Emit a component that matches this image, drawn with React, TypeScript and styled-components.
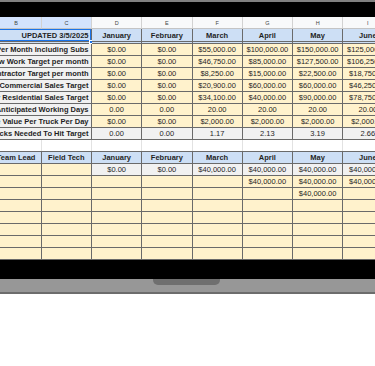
import React from 'react';
import styled, { createGlobalStyle } from 'styled-components';

const GlobalStyle = createGlobalStyle`
  html, body { margin: 0; padding: 0; background: #ffffff; }
  body { font-family: "Liberation Sans", Arial, sans-serif; }
`;

const COL = 50.25;
const CREAM = '#fff2cc';
const GRAY = '#f1f1f1';
const BLUE = '#cddff5';
const LINE = '#6a6a6a';

const Laptop = styled.div`
  width: 375px;
  display: flex;
  flex-direction: column;
`;

const TopEdge = styled.div`
  height: 2px;
  background: #808080;
`;

const Bezel = styled.div<{ $h: number }>`
  height: ${(p) => p.$h}px;
  background: #000000;
`;

const Screen = styled.div`
  height: 243px;
  overflow: hidden;
  background: #ffffff;
`;

const Sheet = styled.div`
  margin-left: -8.5px;
  width: ${8 * COL}px;
  display: flex;
  flex-direction: column;
`;

const Row = styled.div<{ $h: number }>`
  display: grid;
  grid-template-columns: repeat(8, ${COL}px);
  height: ${(p) => p.$h}px;
`;

const LetterCell = styled.div<{ $sel?: boolean }>`
  box-sizing: border-box;
  display: flex;
  align-items: center;
  justify-content: center;
  background: ${(p) => (p.$sel ? '#d3e3fd' : '#f8f9fa')};
  border-right: 1px solid #d2d2d2;
  border-bottom: 1px solid #c4c4c4;
  font-size: 5.5px;
  color: #444746;
`;

const BlankCell = styled.div`
  box-sizing: border-box;
  border-right: 1px solid #e2e2e2;
  background: #ffffff;
`;

type CellProps = {
  $bg: string;
  $bold?: boolean;
  $align?: 'center' | 'right';
  $span?: number;
  $top?: boolean;
  $double?: boolean;
  $selected?: boolean;
};

const Cell = styled.div<CellProps>`
  box-sizing: border-box;
  position: relative;
  grid-column: span ${(p) => p.$span ?? 1};
  display: flex;
  align-items: center;
  justify-content: ${(p) => (p.$align === 'right' ? 'flex-end' : 'center')};
  padding-right: ${(p) => (p.$align === 'right' ? '2.5px' : '0')};
  background: ${(p) => p.$bg};
  border-right: 1px solid ${LINE};
  border-top: ${(p) => (p.$top ? `1px solid ${LINE}` : 'none')};
  border-bottom: ${(p) => (p.$double ? `3px double ${LINE}` : `1px solid ${LINE}`)};
  box-shadow: ${(p) => (p.$selected ? 'inset 0 0 0 1px #1a73e8' : 'none')};
  font-size: 7.5px;
  font-weight: ${(p) => (p.$bold ? 700 : 400)};
  color: #1f1f1f;
  white-space: nowrap;
  overflow: visible;
`;

const Handle = styled.span`
  position: absolute;
  right: -2px;
  bottom: -3px;
  width: 4px;
  height: 4px;
  background: #1a73e8;
  border: 0.5px solid #ffffff;
  box-sizing: border-box;
`;

const Base = styled.div`
  height: 13px;
  background: #979797;
  display: flex;
  justify-content: center;
`;

const Notch = styled.div`
  width: 67px;
  height: 6px;
  margin-right: 2px;
  background: #6f6f6f;
  border-radius: 0 0 5px 5px;
`;

const BaseEdge = styled.div`
  height: 2px;
  background: #6c6c6c;
`;

const letters = ['B', 'C', 'D', 'E', 'F', 'G', 'H', 'I'];
const months = ['January', 'February', 'March', 'April', 'May', 'June'];

type DataRow = { label: string; values: string[]; gray?: boolean };

const targets: DataRow[] = [
  { label: 'Revenue Target Per Month Including Subs', values: ['$0.00', '$0.00', '$55,000.00', '$100,000.00', '$150,000.00', '$125,000.00'] },
  { label: 'New Work Target per month', values: ['$0.00', '$0.00', '$46,750.00', '$85,000.00', '$127,500.00', '$106,250.00'] },
  { label: 'Subcontractor Target per month', values: ['$0.00', '$0.00', '$8,250.00', '$15,000.00', '$22,500.00', '$18,750.00'] },
  { label: 'Monthly Commercial Sales Target', values: ['$0.00', '$0.00', '$20,900.00', '$60,000.00', '$60,000.00', '$46,250.00'] },
  { label: 'Monthly Residential Sales Target', values: ['$0.00', '$0.00', '$34,100.00', '$40,000.00', '$90,000.00', '$78,750.00'] },
  { label: 'Anticipated Working Days', values: ['0.00', '0.00', '20.00', '20.00', '20.00', '20.00'] },
  { label: 'Average Value Per Truck Per Day', values: ['$0.00', '$0.00', '$2,000.00', '$2,000.00', '$2,000.00', '$2,000.00'] },
  { label: 'Trucks Needed To Hit Target', values: ['0.00', '0.00', '1.17', '2.13', '3.19', '2.66'], gray: true },
];

const team: { values: string[]; gray?: boolean }[] = [
  { values: ['$0.00', '$0.00', '$40,000.00', '$40,000.00', '$40,000.00', '$40,000.00'], gray: true },
  { values: ['', '', '', '$40,000.00', '$40,000.00', '$40,000.00'] },
  { values: ['', '', '', '', '$40,000.00', ''] },
  { values: ['', '', '', '', '', ''] },
  { values: ['', '', '', '', '', ''] },
  { values: ['', '', '', '', '', ''] },
  { values: ['', '', '', '', '', ''] },
  { values: ['', '', '', '', '', ''] },
];

export default function App() {
  return (
    <>
      <GlobalStyle />
      <Laptop>
        <TopEdge />
        <Bezel $h={15} />
        <Screen>
          <Sheet>
            <Row $h={12}>
              {letters.map((l, i) => (
                <LetterCell key={l} $sel={i < 2}>
                  {l}
                </LetterCell>
              ))}
            </Row>
            <Row $h={15}>
              <Cell $bg={BLUE} $bold $align="right" $span={2} $double $selected>
                UPDATED 3/5/2025
                <Handle />
              </Cell>
              {months.map((m) => (
                <Cell key={m} $bg={BLUE} $bold $double>
                  {m}
                </Cell>
              ))}
            </Row>
            {targets.map((r) => (
              <Row $h={12} key={r.label}>
                <Cell $bg={GRAY} $bold $align="right" $span={2}>
                  {r.label}
                </Cell>
                {r.values.map((v, i) => (
                  <Cell key={i} $bg={r.gray ? GRAY : CREAM}>
                    {v}
                  </Cell>
                ))}
              </Row>
            ))}
            <Row $h={11}>
              {letters.map((l) => (
                <BlankCell key={l} />
              ))}
            </Row>
            <Row $h={13}>
              <Cell $bg={BLUE} $bold $top>
                Team Lead
              </Cell>
              <Cell $bg={BLUE} $bold $top>
                Field Tech
              </Cell>
              {months.map((m) => (
                <Cell key={m} $bg={BLUE} $bold $top>
                  {m}
                </Cell>
              ))}
            </Row>
            {team.map((r, ri) => (
              <Row $h={12} key={ri}>
                <Cell $bg={CREAM} />
                <Cell $bg={CREAM} />
                {r.values.map((v, i) => (
                  <Cell key={i} $bg={r.gray ? GRAY : CREAM}>
                    {v}
                  </Cell>
                ))}
              </Row>
            ))}
          </Sheet>
        </Screen>
        <Bezel $h={19} />
        <Base>
          <Notch />
        </Base>
        <BaseEdge />
      </Laptop>
    </>
  );
}
